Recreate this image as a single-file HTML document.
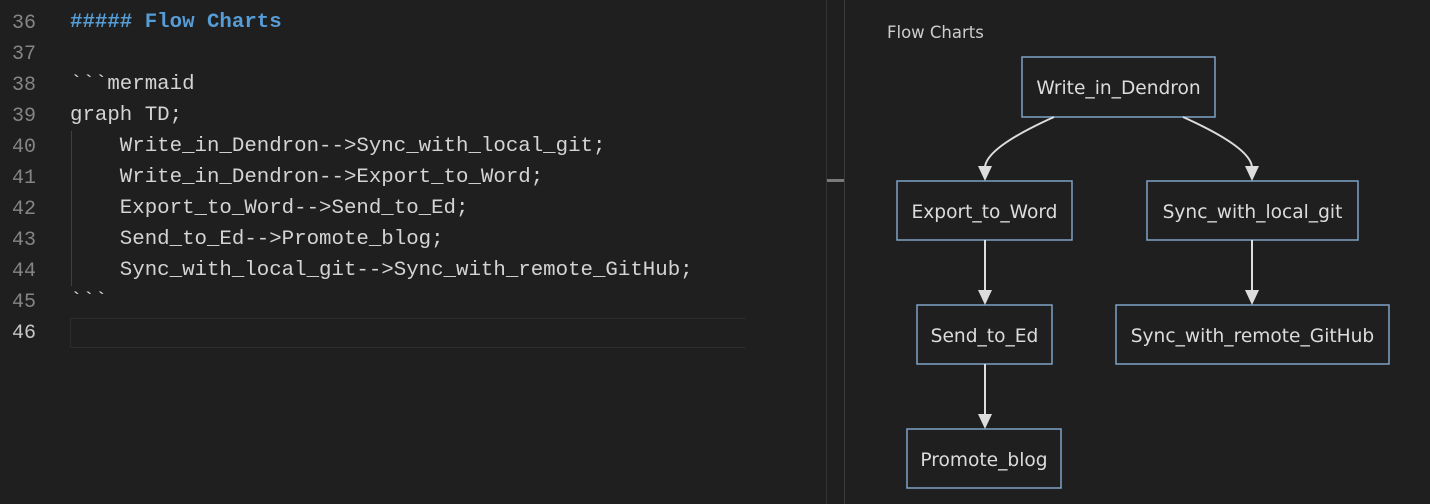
<!DOCTYPE html>
<html><head><style>
body{margin:0;width:1430px;height:504px;background:#1f1f1f;overflow:hidden;position:relative;font-family:"Liberation Mono",monospace}
.ln{position:absolute;left:0;width:36px;text-align:right;color:#858585;font-size:20px}
.cd{position:absolute;left:70px;color:#d4d4d4;font-size:20.75px;white-space:pre}
</style></head><body>
<div style="position:absolute;left:70px;top:318px;width:675px;height:28px;border:1px solid #2c2c2c;border-right:none"></div>
<div style="position:absolute;left:71px;top:131px;width:1px;height:155px;background:#404040"></div>
<div style="position:absolute;left:826px;top:0;width:1px;height:504px;background:#333"></div>
<div style="position:absolute;left:844px;top:0;width:1px;height:504px;background:#3a3a3a"></div>
<div style="position:absolute;left:827px;top:179px;width:17px;height:3px;background:#7a7a7a"></div>
<div style="position:absolute;left:0;top:3px;width:800px;height:360px">
<div class="ln" style="top:9px">36</div><div class="cd" style="top:8px;color:#569cd6;font-weight:bold">##### Flow Charts</div>
<div class="ln" style="top:40px">37</div>
<div class="ln" style="top:71px">38</div><div class="cd" style="top:70px">&#96;&#96;&#96;mermaid</div>
<div class="ln" style="top:102px">39</div><div class="cd" style="top:101px">graph TD;</div>
<div class="ln" style="top:133px">40</div><div class="cd" style="top:132px">    Write_in_Dendron--&gt;Sync_with_local_git;</div>
<div class="ln" style="top:164px">41</div><div class="cd" style="top:163px">    Write_in_Dendron--&gt;Export_to_Word;</div>
<div class="ln" style="top:195px">42</div><div class="cd" style="top:194px">    Export_to_Word--&gt;Send_to_Ed;</div>
<div class="ln" style="top:226px">43</div><div class="cd" style="top:225px">    Send_to_Ed--&gt;Promote_blog;</div>
<div class="ln" style="top:257px">44</div><div class="cd" style="top:256px">    Sync_with_local_git--&gt;Sync_with_remote_GitHub;</div>
<div class="ln" style="top:288px">45</div><div class="cd" style="top:287px">&#96;&#96;&#96;</div>
<div class="ln" style="top:319px;color:#c6c6c6">46</div>
</div>
<svg width="1430" height="504" style="position:absolute;left:0;top:0" font-family="DejaVu Sans,sans-serif">
<text x="887" y="38" fill="#cccccc" font-size="16.5">Flow Charts</text>
<g fill="#1f1f1f" stroke="#7fa2c6" stroke-width="1.5">
<rect x="1022" y="57" width="193" height="60"/>
<rect x="897" y="181" width="175" height="59"/>
<rect x="1147" y="181" width="211" height="59"/>
<rect x="917" y="305" width="135" height="59"/>
<rect x="1116" y="305" width="273" height="59"/>
<rect x="907" y="429" width="154" height="59"/>
</g>
<g fill="#dcdcdc" font-size="18.6" text-anchor="middle">
<text x="1118.5" y="94">Write_in_Dendron</text>
<text x="984.5" y="218">Export_to_Word</text>
<text x="1252.5" y="218">Sync_with_local_git</text>
<text x="984.5" y="342">Send_to_Ed</text>
<text x="1252.5" y="342">Sync_with_remote_GitHub</text>
<text x="984" y="466">Promote_blog</text>
</g>
<g stroke="#dddddd" stroke-width="2" fill="none">
<path d="M1054 117 Q985 148 985 168"/>
<path d="M1183 117 Q1252 148 1252 168"/>
<path d="M985 240 V292"/><path d="M1252 240 V292"/><path d="M985 364 V416"/>
</g>
<g fill="#dddddd">
<path d="M978 166 L992 166 L985 181Z"/><path d="M1245 166 L1259 166 L1252 181Z"/>
<path d="M978 290 L992 290 L985 305Z"/><path d="M1245 290 L1259 290 L1252 305Z"/>
<path d="M978 414 L992 414 L985 429Z"/>
</g>
</svg>
</body></html>
